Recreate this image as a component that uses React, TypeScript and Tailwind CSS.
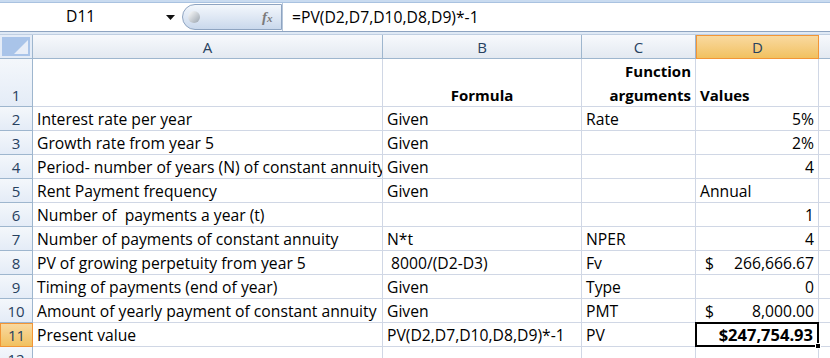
import React from 'react';

const cols = ['A', 'B', 'C', 'D'];

type Row = {
  a: string;
  b?: string;
  c?: string;
  d?: string;
  dAlign?: 'left' | 'right';
};

const rows: Row[] = [
  { a: 'Interest rate per year', b: 'Given', c: 'Rate', d: '5%' },
  { a: 'Growth rate from year 5', b: 'Given', d: '2%' },
  { a: 'Period- number of years (N) of constant annuity', b: 'Given', d: '4' },
  { a: 'Rent Payment frequency', b: 'Given', d: 'Annual', dAlign: 'left' },
  { a: 'Number of\u00a0 payments a year (t)', d: '1' },
  { a: 'Number of payments of constant annuity', b: 'N*t', c: 'NPER', d: '4' },
  { a: 'PV of growing perpetuity from year 5', b: '\u00a08000/(D2-D3)', c: 'Fv', d: 'money:266,666.67' },
  { a: 'Timing of payments (end of year)', b: 'Given', c: 'Type', d: '0' },
  { a: 'Amount of yearly payment of constant annuity', b: 'Given', c: 'PMT', d: 'money:8,000.00' },
];

const cell = 'border-r border-b border-[#d0d7e5] px-[4px] flex items-end pb-[1px] whitespace-nowrap overflow-hidden';
const rowHead =
  'border-r border-b border-[#9eb6ce] bg-gradient-to-b from-[#f4f7fb] to-[#e4ecf7] flex items-end justify-center pb-[1px] text-[15px] text-[#27415f]';

function Value({ v }: { v?: string }) {
  if (v && v.startsWith('money:')) {
    return (
      <span className="flex w-full justify-between pl-[5px]">
        <span>$</span>
        <span>{v.slice(6)}</span>
      </span>
    );
  }
  return <>{v}</>;
}

export default function App() {
  return (
    <div
      className="w-[830px] h-[358px] overflow-hidden bg-white text-[15.7px] leading-[20px] text-black"
      style={{ fontFamily: '"Open Sans", "Noto Sans", sans-serif' }}
    >
      {/* ribbon edge */}
      <div className="h-[3px] bg-[#c9dbf0] border-b border-[#a9c2e0]" />

      {/* formula bar */}
      <div className="h-[28px] flex bg-white">
        <div className="w-[182px] relative">
          <span className="absolute left-[66px] top-[3px]">D11</span>
          <svg className="absolute left-[166px] top-[12px]" width="9" height="5" viewBox="0 0 9 5">
            <path d="M0 0h9L4.5 5z" fill="#111" />
          </svg>
        </div>
        <div className="w-[100px] h-[26px] mt-[1px] rounded-l-[13px] border border-[#8ea4c1] bg-gradient-to-b from-[#f3f7fc] via-[#dfe8f4] to-[#c9d8ec] relative">
          <span className="absolute left-[5px] top-[6px] w-[12px] h-[12px] rounded-full bg-gradient-to-br from-[#ffffff] to-[#9aa4ae]" />
          <span
            className="absolute left-[79px] top-[2px] text-[#7b7b7b] italic font-bold text-[15px]"
            style={{ fontFamily: '"Liberation Serif", serif' }}
          >
            f<span className="text-[11px]">x</span>
          </span>
        </div>
        <div className="flex-1 flex items-center pl-[9px] border-l border-[#b6c6da]">
          =PV(D2,D7,D10,D8,D9)*-1
        </div>
      </div>

      {/* separator */}
      <div className="h-[4px] border-t border-[#8ea4c1] bg-[#dfe9f5] border-b border-b-[#c0cfe2]" />

      {/* sheet */}
      <div className="grid grid-cols-[33px_350px_199px_114px_123px_11px] grid-rows-[24px_48px_repeat(11,24px)]">
        {/* corner */}
        <div className="border-r border-b border-[#9eb6ce] bg-[#e4ecf7] p-[2px]">
          <div className="w-full h-full bg-[#a9c4e9] relative overflow-hidden">
            <svg className="absolute right-[2px] bottom-[2px]" width="14" height="14" viewBox="0 0 14 14">
              <path d="M14 0V14H0z" fill="#e8eef8" />
            </svg>
          </div>
        </div>
        {cols.map((c) =>
          c === 'D' ? (
            <div
              key={c}
              className="border border-[#f29536] bg-gradient-to-b from-[#f9d99f] to-[#f1c15f] flex items-center justify-center text-[15px] text-[#27415f]"
            >
              {c}
            </div>
          ) : (
            <div
              key={c}
              className="border-r border-b border-[#9eb6ce] bg-gradient-to-b from-[#f7f9fc] to-[#e3e9f1] flex items-center justify-center text-[15px] text-[#27415f]"
            >
              {c}
            </div>
          )
        )}
        <div className="border-b border-[#9eb6ce] bg-gradient-to-b from-[#f7f9fc] to-[#e3e9f1]" />

        {/* row 1 */}
        <div className={rowHead}>1</div>
        <div className={cell} />
        <div className={cell + ' justify-center font-bold text-[15px]'}>Formula</div>
        <div className={cell + ' flex-col justify-end items-center font-bold text-[15px] gap-[4px]'}>
          <span>Function</span>
          <span>arguments</span>
        </div>
        <div className={cell + ' font-bold text-[15px]'}>Values</div>
        <div className="border-b border-[#d0d7e5]" />

        {rows.map((r, i) => (
          <React.Fragment key={i}>
            <div className={rowHead}>{i + 2}</div>
            <div className={cell}>{r.a}</div>
            <div className={cell}>{r.b}</div>
            <div className={cell}>{r.c}</div>
            <div className={cell + (r.dAlign === 'left' ? '' : ' justify-end')}>
              <Value v={r.d} />
            </div>
            <div className="border-b border-[#d0d7e5]" />
          </React.Fragment>
        ))}

        {/* row 11 */}
        <div className="border border-[#f29536] bg-gradient-to-b from-[#f9d99f] to-[#f1c15f] flex items-end justify-center pb-[1px] text-[15px] text-[#27415f]">
          11
        </div>
        <div className={cell}>Present value</div>
        <div className={cell}>PV(D2,D7,D10,D8,D9)*-1</div>
        <div className={cell}>PV</div>
        <div className="relative border-2 border-black -ml-[1px] -mt-[1px] flex items-end justify-end pr-[4px] pb-[0px] font-bold text-[16.5px]">
          $247,754.93
          <span className="absolute -right-[4px] -bottom-[4px] w-[6px] h-[6px] bg-black border border-white" />
        </div>
        <div className="border-b border-[#d0d7e5]" />

        {/* row 12 */}
        <div className={rowHead}>12</div>
        <div className={cell} />
        <div className={cell} />
        <div className={cell} />
        <div className={cell} />
        <div />
      </div>
    </div>
  );
}
